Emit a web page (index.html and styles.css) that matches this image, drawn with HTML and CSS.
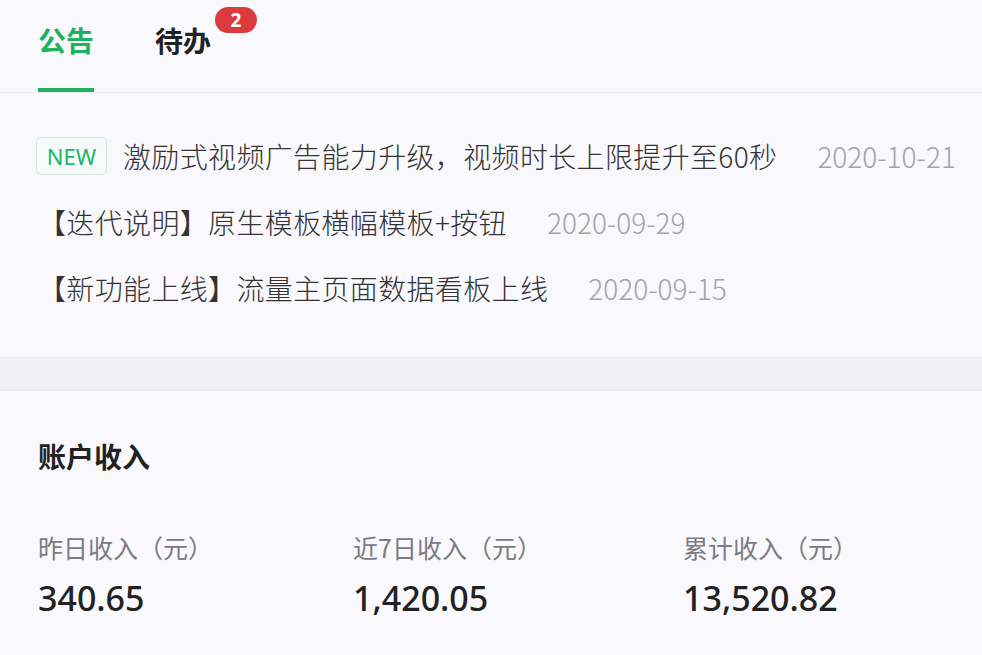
FILE: index.html
```html
<!DOCTYPE html>
<html lang="zh-CN">
<head>
<meta charset="utf-8">
<title>公告</title>
<link rel="stylesheet" href="styles.css">
</head>
<body>
<div class="page">
  <div class="tabs">
    <div class="tab active">公告</div>
    <div class="tab">待办<span class="badge">2</span></div>
  </div>
  <div class="notices">
    <div class="row">
      <span class="tag">NEW</span>
      <span class="title">激励式视频广告能力升级，视频时长上限提升至60秒</span>
      <span class="date">2020-10-21</span>
    </div>
    <div class="row">
      <span class="title">【迭代说明】原生模板横幅模板+按钮</span>
      <span class="date">2020-09-29</span>
    </div>
    <div class="row">
      <span class="title">【新功能上线】流量主页面数据看板上线</span>
      <span class="date">2020-09-15</span>
    </div>
  </div>
  <div class="band"></div>
  <div class="income">
    <div class="income-title">账户收入</div>
    <div class="stats">
      <div class="stat">
        <div class="label">昨日收入（元）</div>
        <div class="value">340.65</div>
      </div>
      <div class="stat">
        <div class="label">近7日收入（元）</div>
        <div class="value">1,420.05</div>
      </div>
      <div class="stat">
        <div class="label">累计收入（元）</div>
        <div class="value">13,520.82</div>
      </div>
    </div>
  </div>
</div>
</body>
</html>
```
FILE: styles.css
```css
* { box-sizing: border-box; }
html, body {
  margin: 0;
  padding: 0;
  background: #f9f8fc;
}
body {
  font-family: "Noto Sans CJK SC", "Noto Sans", sans-serif;
  color: #333;
  width: 982px;
  height: 655px;
  overflow: hidden;
}
.tabs {
  display: flex;
  height: 93px;
  padding-left: 38px;
  gap: 61px;
  border-bottom: 1px solid #e9e8ee;
}
.tab {
  position: relative;
  font-size: 28px;
  font-weight: 700;
  line-height: 80px;
  height: 92px;
  color: #222;
}
.tab.active {
  color: #1fb25e;
  border-bottom: 4px solid #1fb25e;
}
.badge {
  position: absolute;
  left: 60px;
  top: 7px;
  width: 42px;
  height: 26px;
  border-radius: 13px;
  background: #db3b3d;
  color: #fff;
  font-size: 19px;
  font-weight: 700;
  line-height: 26px;
  text-align: center;
  font-family: "Noto Sans", sans-serif;
}
.notices {
  padding: 44px 0 50px 38px;
  display: flex;
  flex-direction: column;
  gap: 28px;
}
.row {
  display: flex;
  align-items: center;
  height: 38px;
  font-size: 28px;
  line-height: 38px;
}
.tag {
  width: 71px;
  height: 38px;
  border: 1px solid #d6e6df;
  border-radius: 5px;
  background: #f4fbf8;
  color: #22b46a;
  font-family: "Noto Sans", sans-serif;
  font-size: 22px;
  line-height: 36px;
  text-align: center;
  margin-left: -2px;
  margin-right: 16px;
}
.title {
  color: #333;
  font-weight: 300;
  letter-spacing: 0.35px;
  white-space: nowrap;
}
.date {
  color: #a3a3ab;
  margin-left: 40px;
  font-size: 28px;
  font-weight: 300;
  white-space: nowrap;
}
.band {
  height: 34px;
  background: #f1f0f5;
  border-top: 1px solid #e9e8ee;
  border-bottom: 1px solid #e9e8ee;
}
.income {
  padding: 45px 0 0 38px;
}
.income-title {
  font-size: 28px;
  font-weight: 700;
  line-height: 40px;
  color: #222;
}
.stats {
  display: grid;
  grid-template-columns: 315px 330px auto;
  margin-top: 53px;
}
.label {
  font-size: 25px;
  line-height: 36px;
  color: #7b7b82;
}
.value {
  margin-top: 10px;
  font-family: "Noto Sans", sans-serif;
  font-size: 34px;
  line-height: 46px;
  font-weight: 500;
  color: #222;
}
```
